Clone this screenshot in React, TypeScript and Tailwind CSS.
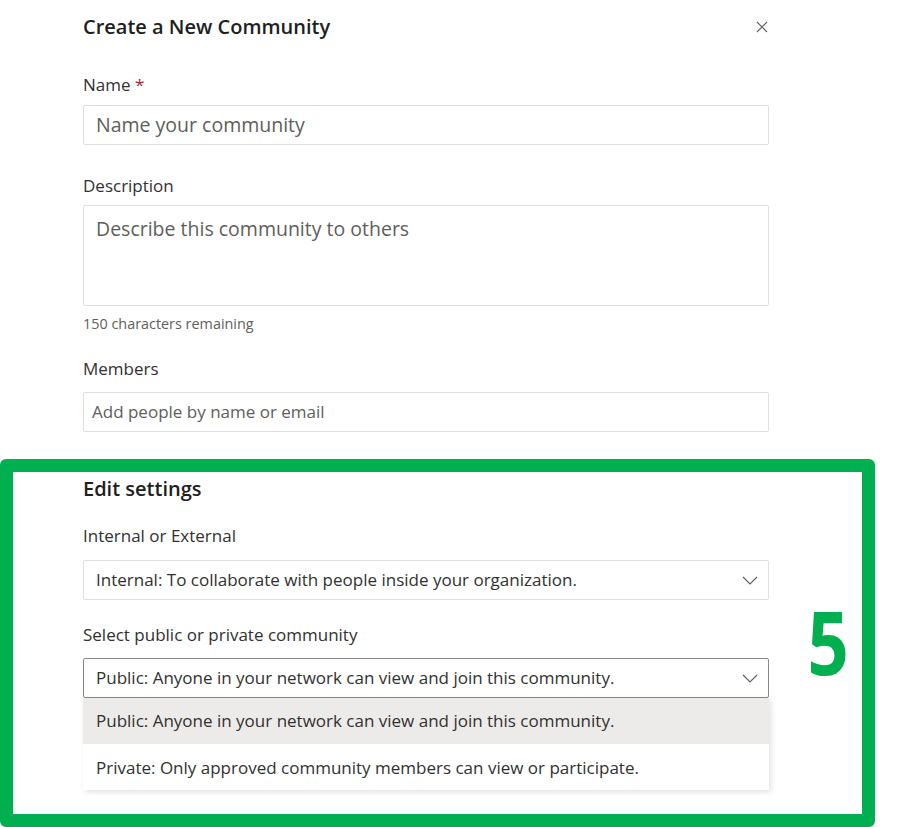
import React from "react";

const FONT = "font-['Open_Sans','Noto_Sans',sans-serif]";

function Chevron() {
  return (
    <svg width="16" height="9" viewBox="0 0 16 9" fill="none" className="shrink-0">
      <path d="M1 1l7 7 7-7" stroke="#605e5c" strokeWidth="1.1" />
    </svg>
  );
}

function Label({ children, className = "" }: { children: React.ReactNode; className?: string }) {
  return <div className={`h-[22px] text-[17px] leading-[22px] text-[#323130] ${className}`}>{children}</div>;
}

function Select({ value, active = false }: { value: string; active?: boolean }) {
  return (
    <div
      className={`flex h-10 items-center justify-between rounded-[2px] border pl-[12px] pr-[10px] ${
        active ? "border-[#8a8886]" : "border-[#e1dfdd]"
      }`}
    >
      <span className="text-[17px] text-[#323130]">{value}</span>
      <Chevron />
    </div>
  );
}

export default function App() {
  return (
    <div className={`relative h-[827px] w-[904px] overflow-hidden bg-white ${FONT}`}>
      {/* top form */}
      <div className="w-[686px] pl-[83px] pt-[13px] box-content">
        <div className="flex h-[28px] items-center justify-between">
          <h1 className="text-[20px] font-semibold leading-[28px] text-[#201f1e]">Create a New Community</h1>
          <svg width="12" height="12" viewBox="0 0 12 12" className="mr-[1px]">
            <path d="M1 1l10 10M11 1L1 11" stroke="#605e5c" strokeWidth="1.1" />
          </svg>
        </div>

        <Label className="mt-[33px]">
          Name <span className="text-[#a4262c]">*</span>
        </Label>
        <div className="mt-[9px] flex h-10 items-center rounded-[2px] border border-[#e1dfdd] px-[12px]">
          <span className="text-[19.5px] text-[#605e5c]">Name your community</span>
        </div>

        <Label className="mt-[30px]">Description</Label>
        <div className="mt-[8px] h-[101px] rounded-[2px] border border-[#e1dfdd] px-[12px] pt-[8px]">
          <span className="text-[19.5px] leading-[30px] text-[#605e5c]">Describe this community to others</span>
        </div>
        <div className="mt-[8px] h-[20px] text-[14.4px] leading-[20px] text-[#605e5c]">150 characters remaining</div>

        <Label className="mt-[24px]">Members</Label>
        <div className="mt-[12px] flex h-10 items-center rounded-[2px] border border-[#e1dfdd] px-[8px]">
          <span className="text-[17px] text-[#605e5c]">Add people by name or email</span>
        </div>
      </div>

      {/* highlighted settings */}
      <div className="mt-[27px] flex h-[368px] w-[875px] items-center rounded-[6px] border-[13px] border-[#00b050]">
        <div className="w-[686px] shrink-0 self-start pl-[70px] pt-[3px] box-content">
          <div className="h-[28px] text-[20px] font-semibold leading-[28px] text-[#201f1e]">Edit settings</div>

          <Label className="mt-[22px]">Internal or External</Label>
          <div className="mt-[13px]">
            <Select value="Internal: To collaborate with people inside your organization." />
          </div>

          <Label className="mt-[24px]">Select public or private community</Label>
          <div className="mt-[12px]">
            <Select value="Public: Anyone in your network can view and join this community." active />
          </div>
          <div className="h-[92px] overflow-hidden bg-white shadow-[2px_2px_6px_rgba(0,0,0,0.12)]">
            <div className="flex h-[46px] items-center bg-[#edebe9] pl-[13px] text-[17px] text-[#323130]">
              Public: Anyone in your network can view and join this community.
            </div>
            <div className="flex h-[46px] items-center pl-[13px] pt-[2px] text-[17px] text-[#323130]">
              Private: Only approved community members can view or participate.
            </div>
          </div>
        </div>
        <div className="flex flex-1 justify-center pb-[5px] pl-[26px]">
          <span className="scale-x-[0.82] text-[88px] font-bold leading-none text-[#00b050]">5</span>
        </div>
      </div>
    </div>
  );
}
